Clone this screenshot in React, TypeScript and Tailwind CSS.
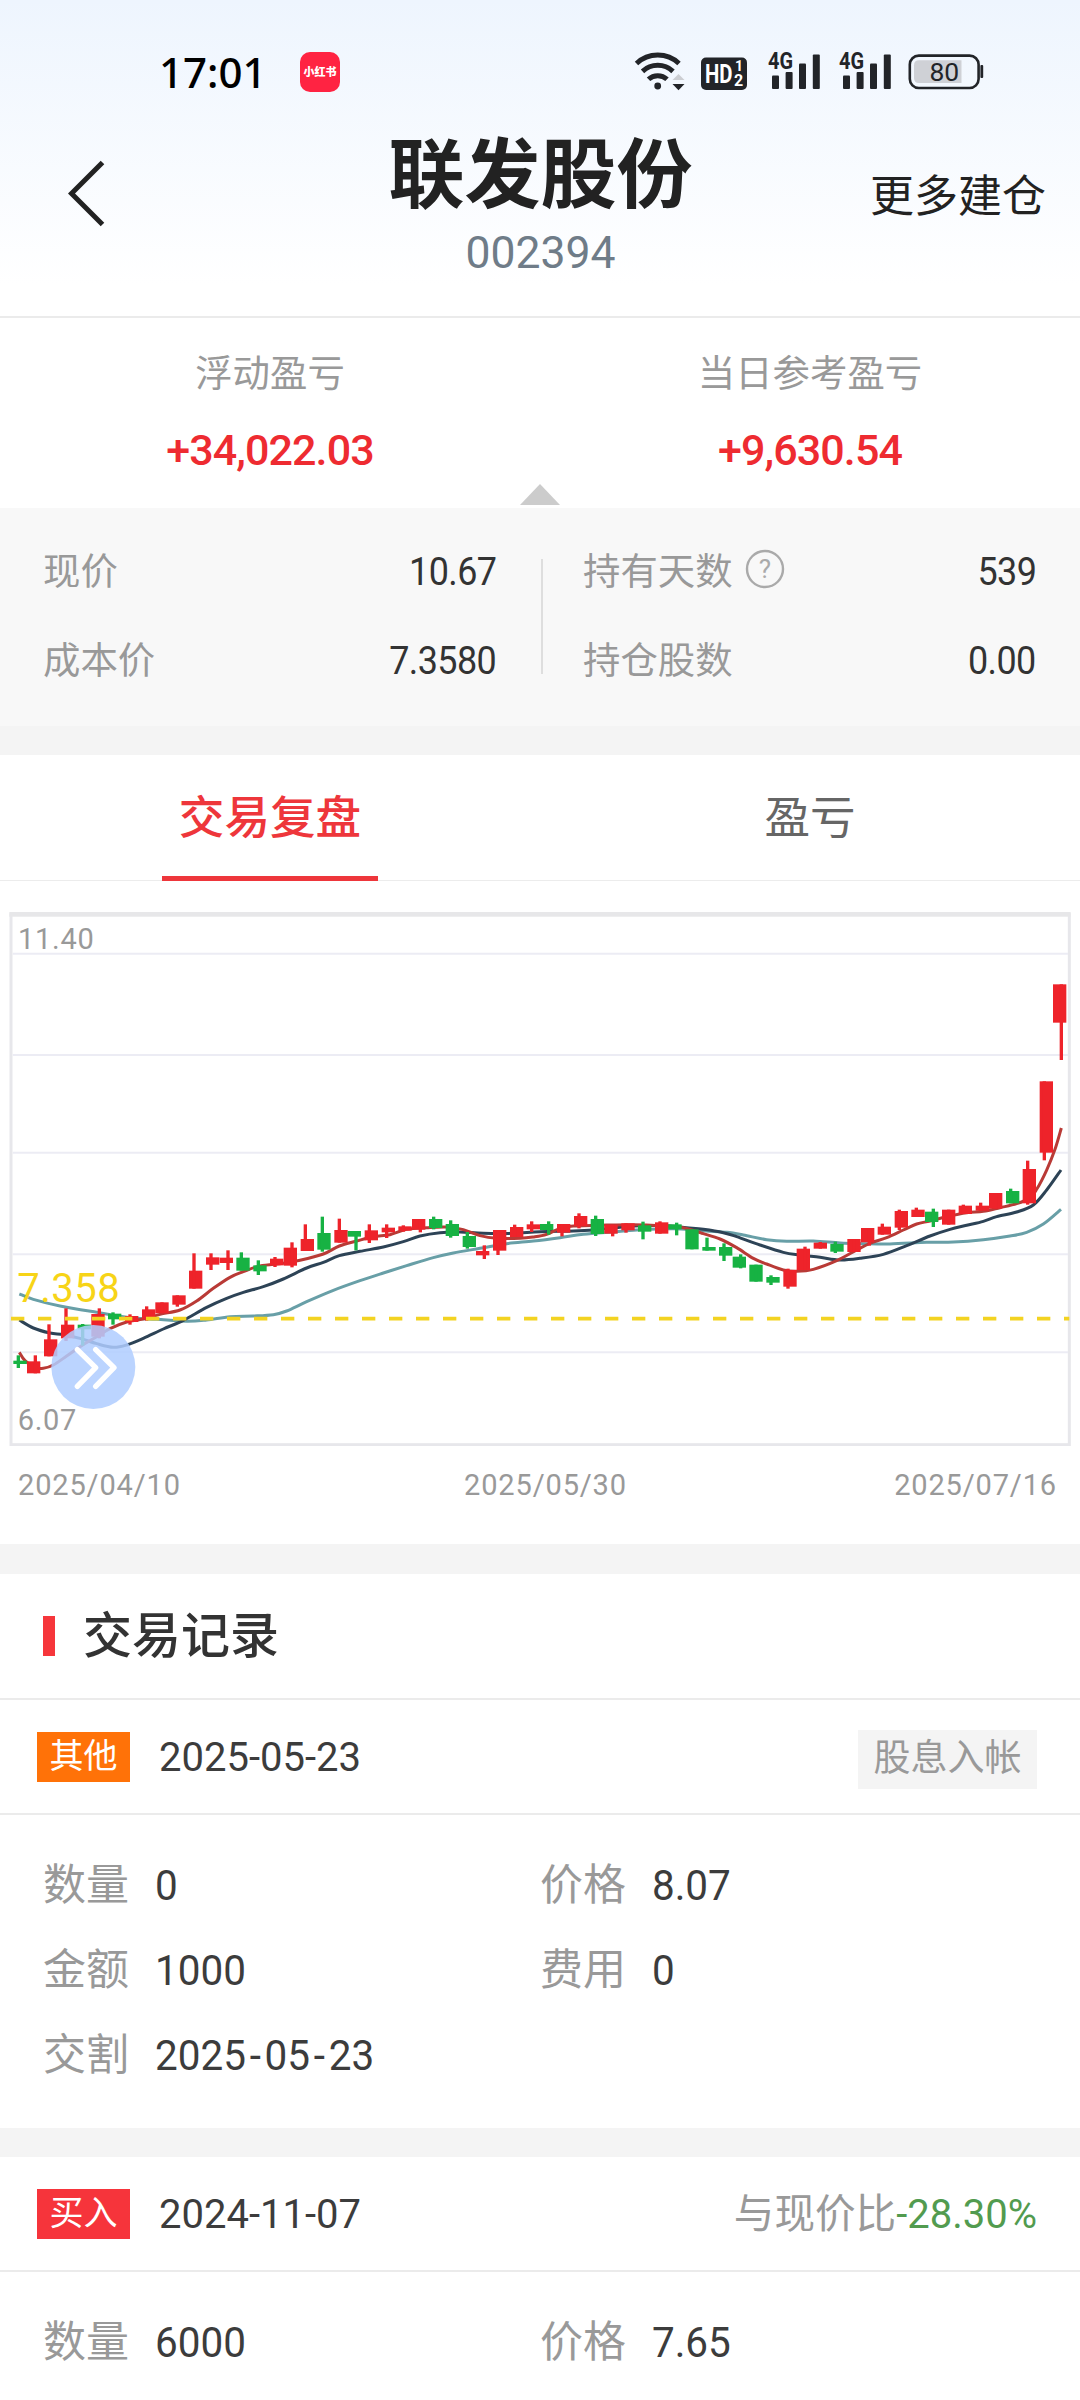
import React, { useState } from 'react';

type Point = [number, number];
// [direction, body left, body top, body bottom, wick x, wick top, wick bottom]
type Candle = ['r' | 'g', number, number, number, number, number, number];

interface Segment<T> {
  dx: number;
  dy: number;
  items: T[];
}

interface TradeRecord {
  id: number;
  kind: string;
  kindClass: string;
  date: string;
  note?: string;
  compare?: string;
  fields: { label: string; value: string }[];
}

const RED = '#ee232a';
const GREEN = '#17b243';

const candleSegments: Segment<Candle>[] = [
  {
    dx: 0,
    dy: 624,
    items: [
      ['g', 40, 722, 732, 55, 706, 744],
      ['r', 81, 724, 760, 106, 706, 760],
      ['r', 132, 658, 709, 147, 613, 709],
      ['r', 183, 614, 655, 198, 565, 663],
      ['g', 233, 614, 628, 248, 612, 677],
      ['r', 274, 582, 650, 298, 565, 655],
      ['g', 324, 581, 598, 339, 577, 614],
      ['r', 375, 588, 606, 390, 583, 614],
      ['r', 426, 568, 598, 440, 559, 602],
      ['r', 466, 547, 580, 486, 547, 580],
      ['r', 517, 526, 554, 532, 526, 560],
      ['r', 567, 452, 506, 582, 400, 506],
      ['r', 618, 412, 434, 633, 400, 450],
      ['r', 659, 413, 429, 684, 391, 450],
      ['g', 709, 413, 452, 724, 397, 452],
      ['g', 760, 436, 454, 775, 421, 465],
      ['r', 810, 416, 436, 825, 411, 441],
      ['r', 851, 383, 437, 876, 367, 442],
      ['r', 902, 357, 393, 916, 313, 393],
      ['g', 952, 339, 389, 967, 290, 395],
      ['r', 1003, 330, 368, 1018, 296, 368],
      ['g', 1043, 333, 350, 1068, 333, 391],
      ['r', 1094, 331, 361, 1108, 313, 369],
      ['r', 1145, 323, 337, 1160, 313, 354],
    ],
  },
  {
    dx: 1020,
    dy: 684,
    items: [
      ['r', 175, 259, 272, 190, 256, 275],
      ['r', 216, 237, 269, 241, 237, 277],
      ['g', 267, 237, 264, 281, 230, 268],
      ['g', 317, 252, 288, 332, 241, 293],
      ['g', 368, 288, 321, 382, 276, 326],
      ['r', 408, 333, 346, 433, 316, 357],
      ['r', 459, 270, 332, 474, 270, 345],
      ['r', 510, 261, 291, 524, 254, 291],
      ['r', 560, 253, 268, 575, 244, 276],
      ['g', 600, 252, 270, 626, 244, 284],
      ['r', 651, 252, 278, 666, 252, 289],
      ['r', 702, 228, 258, 717, 220, 265],
      ['g', 752, 237, 282, 767, 227, 288],
      ['r', 793, 254, 281, 818, 254, 289],
      ['r', 844, 250, 271, 858, 250, 278],
      ['g', 894, 256, 275, 909, 245, 298],
      ['r', 945, 247, 281, 960, 244, 281],
      ['g', 985, 253, 268, 1010, 248, 286],
      ['g', 1036, 268, 328, 1056, 268, 328],
      ['g', 1087, 321, 332, 1101, 293, 332],
      ['g', 1137, 321, 347, 1152, 310, 363],
    ],
  },
  {
    dx: 2100,
    dy: 84,
    items: [
      ['g', 98, 950, 983, 122, 943, 985],
      ['g', 148, 974, 1025, 168, 974, 1025],
      ['g', 199, 1011, 1028, 213, 1006, 1035],
      ['r', 250, 990, 1040, 264, 986, 1046],
      ['r', 290, 926, 990, 315, 920, 990],
      ['r', 341, 908, 926, 361, 906, 926],
      ['g', 391, 912, 935, 406, 905, 939],
      ['r', 442, 897, 936, 462, 897, 936],
      ['r', 483, 864, 907, 508, 864, 917],
      ['r', 533, 860, 884, 547, 851, 884],
      ['r', 584, 813, 863, 598, 809, 870],
      ['r', 634, 809, 831, 649, 803, 831],
      ['g', 675, 815, 846, 700, 806, 861],
      ['r', 726, 809, 854, 746, 809, 854],
      ['r', 776, 797, 822, 790, 794, 822],
      ['r', 827, 797, 812, 842, 788, 812],
      ['r', 867, 759, 806, 887, 759, 806],
      ['g', 918, 753, 790, 932, 746, 790],
      ['r', 968, 687, 790, 983, 662, 794],
      ['r', 1019, 424, 638, 1033, 424, 661],
      ['r', 1059, 133, 248, 1084, 133, 360],
    ],
  },
];

const shortAverage: Segment<Point>[] = [
  {
    dx: 0,
    dy: 624,
    items: [[58, 697], [75, 722], [105, 743], [130, 745], [160, 735], [200, 708], [240, 680], [290, 650], [330, 626], [380, 606], [430, 597], [480, 583], [540, 570], [590, 543], [640, 505], [690, 472], [730, 455], [780, 438], [850, 430], [900, 421], [970, 402], [1018, 378]],
  },
  {
    dx: 1020,
    dy: 684,
    items: [[50, 303], [100, 290], [150, 284], [200, 268], [260, 263], [320, 261], [370, 269], [420, 287], [470, 295], [540, 295], [580, 291], [620, 283], [660, 265], [700, 258], [800, 255], [880, 254], [960, 257], [1030, 263], [1075, 276]],
  },
  {
    dx: 2100,
    dy: 84,
    items: [[10, 881], [60, 897], [110, 923], [160, 955], [200, 972], [250, 990], [290, 994], [340, 988], [410, 962], [470, 930], [510, 910], [560, 893], [610, 870], [650, 852], [690, 843], [740, 830], [800, 818], [850, 814], [900, 803], [950, 791], [990, 773], [1010, 748], [1040, 690], [1065, 628], [1084, 564]],
  },
];

const midAverage: Segment<Point>[] = [
  {
    dx: 0,
    dy: 624,
    items: [[58, 600], [100, 624], [150, 639], [190, 644], [240, 655], [290, 671], [340, 682], [380, 675], [430, 655], [490, 627], [550, 601], [620, 562], [680, 535], [730, 517], [790, 500], [850, 477], [920, 444], [970, 427], [1018, 407]],
  },
  {
    dx: 1020,
    dy: 684,
    items: [[60, 334], [130, 321], [190, 305], [240, 288], [300, 278], [360, 276], [430, 280], [520, 280], [600, 275], [700, 273], [760, 270], [840, 262], [900, 257], [980, 257], [1040, 263]],
  },
  {
    dx: 2100,
    dy: 84,
    items: [[10, 868], [70, 878], [110, 890], [180, 915], [250, 937], [300, 945], [360, 952], [420, 960], [480, 955], [550, 943], [620, 917], [690, 888], [750, 868], [800, 856], [850, 844], [890, 830], [950, 816], [1000, 795], [1040, 750], [1083, 690]],
  },
];

const longAverage: Segment<Point>[] = [
  {
    dx: 0,
    dy: 624,
    items: [[58, 522], [100, 538], [180, 558], [290, 577], [400, 594], [470, 598], [560, 604], [620, 600], [690, 590], [760, 588], [820, 584], [860, 573], [920, 545], [1000, 511]],
  },
  {
    dx: 1020,
    dy: 684,
    items: [[60, 422], [130, 399], [200, 377], [280, 353], [340, 339], [420, 325], [500, 311], [580, 303], [660, 293], [730, 283], [830, 275], [900, 269], [1000, 266], [1060, 269]],
  },
  {
    dx: 2100,
    dy: 84,
    items: [[20, 873], [80, 877], [130, 885], [200, 899], [260, 904], [340, 903], [420, 909], [490, 911], [570, 912], [680, 907], [760, 906], [850, 899], [930, 888], [980, 877], [1030, 852], [1083, 808]],
  },
];

const gridLines = [125, 429, 722, 1027, 1321];

const records: TradeRecord[] = [
  {
    id: 1,
    kind: '其他',
    kindClass: 'bg-[#ff7208]',
    date: '2025-05-23',
    note: '股息入帐',
    fields: [
      { label: '数量', value: '0' },
      { label: '价格', value: '8.07' },
      { label: '金额', value: '1000' },
      { label: '费用', value: '0' },
      { label: '交割', value: '2025-05-23' },
    ],
  },
  {
    id: 2,
    kind: '买入',
    kindClass: 'bg-[#f6343b]',
    date: '2024-11-07',
    compare: '-28.30%',
    fields: [
      { label: '数量', value: '6000' },
      { label: '价格', value: '7.65' },
    ],
  },
];

// Catmull-Rom spline through the joined segments
const smoothPath = (segments: Segment<Point>[]) => {
  const p = segments.flatMap((s) => s.items.map(([x, y]): Point => [x + s.dx, y + s.dy]));
  let d = `M${p[0][0]} ${p[0][1]}`;
  for (let i = 0; i < p.length - 1; i++) {
    const a = p[i - 1] || p[i];
    const b = p[i];
    const c = p[i + 1];
    const e = p[i + 2] || c;
    d += ` C${b[0] + (c[0] - a[0]) / 6} ${b[1] + (c[1] - a[1]) / 6} ${c[0] - (e[0] - b[0]) / 6} ${c[1] - (e[1] - b[1]) / 6} ${c[0]} ${c[1]}`;
  }
  return d;
};

function SignalIcon() {
  return (
    <svg className="overflow-visible" width="53" height="38" viewBox="0 0 53 38" fill="#222428">
      <text x="0" y="17.3" fontFamily="Roboto" fontWeight="700" fontSize="23" textLength="25" lengthAdjust="spacingAndGlyphs">
        4G
      </text>
      <rect x="4" y="23.5" width="7" height="13.5" rx="1" />
      <rect x="17.6" y="20" width="7" height="17" rx="1" />
      <rect x="31" y="11.5" width="7" height="25.5" rx="1" />
      <rect x="44.8" y="2.5" width="7" height="34.5" rx="1" />
    </svg>
  );
}

function StatusBar() {
  return (
    <div className="h-[124px] pt-[52px] flex items-start">
      <span className="w-[141px] ml-[159px] font-['Noto_Sans'] font-medium text-[42px] leading-[40px] text-black">
        17:01
      </span>
      <span className="w-10 h-10 rounded-[10px] bg-[#ff2342] text-white font-black text-[11px] leading-[41px] text-center whitespace-nowrap">
        小红书
      </span>
      <div className="ml-[294px] flex items-start">
        <svg width="52" height="40" viewBox="0 0 52 40" fill="none" stroke="#222428" strokeWidth="5">
          <path d="M2.5 11.5 A31 31 0 0 1 45 11.5" />
          <path d="M8.5 19.3 A22.5 22.5 0 0 1 39 19.3" />
          <path d="M14.5 27.3 A13.5 13.5 0 0 1 33 27.3" />
          <circle cx="23.7" cy="34" r="3.4" fill="#222428" stroke="none" />
          <path d="M38.5 28 L44.5 22 L50.5 28 Z" fill="#ccced2" stroke="none" />
          <path d="M38.5 32 L50.5 32 L44.5 38.2 Z" fill="#222428" stroke="none" />
        </svg>
        <svg className="ml-[15px]" width="46" height="40" viewBox="0 0 46 40">
          <rect x="0" y="5.5" width="46" height="32.5" rx="5" fill="#222428" />
          <g fill="#fff" fontFamily="Roboto" fontWeight="700">
            <text x="4" y="31" fontSize="25" textLength="27.5" lengthAdjust="spacingAndGlyphs">HD</text>
            <text x="34" y="18.8" fontSize="14">1</text>
            <text x="33" y="34" fontSize="16">2</text>
          </g>
        </svg>
        <div className="ml-[21px] flex gap-[18px]">
          <SignalIcon />
          <SignalIcon />
        </div>
        <svg className="ml-[16px]" width="76" height="40" viewBox="0 0 76 40">
          <rect x="1.8" y="3.6" width="68.8" height="32.4" rx="9" fill="none" stroke="#222428" strokeWidth="2.6" />
          <path d="M11 8.3 H53.5 V31 H11 Q6 31 6 26 V13.3 Q6 8.3 11 8.3 Z" fill="#cfd1d6" />
          <rect x="72.4" y="13" width="2.8" height="13" rx="1" fill="#222428" />
          <text x="36.3" y="29" fontFamily="Roboto" fontSize="26.5" textAnchor="middle" fill="#222428">80</text>
        </svg>
      </div>
    </div>
  );
}

function Header() {
  return (
    <header className="h-[318px] border-b-2 border-[#ebebeb] bg-gradient-to-b from-[#eef5fe] to-white to-90%">
      <StatusBar />
      <div className="grid grid-cols-3 h-[160px] pl-[68px] pr-[34px]">
        <svg className="mt-[35px]" width="38" height="68" viewBox="0 0 38 68" fill="none" stroke="#222" strokeWidth="5">
          <path d="M34.5 3.5 L3.5 34.5 L34.5 65.5" />
        </svg>
        <div className="flex flex-col items-center justify-self-center mr-[33px] pt-[3px] whitespace-nowrap">
          <h1 className="text-[76px] leading-[98px] font-bold text-[#222]">联发股份</h1>
          <span className="text-[44.5px] leading-[56px] text-[#6f7c88]">002394</span>
        </div>
        <button className="mt-[43px] h-[60px] leading-[60px] text-[44px] text-[#222] text-right">更多建仓</button>
      </div>
    </header>
  );
}

function Summary() {
  const items = [
    { label: '浮动盈亏', value: '+34,022.03' },
    { label: '当日参考盈亏', value: '+9,630.54' },
  ];
  return (
    <section className="relative h-[190px] bg-white grid grid-cols-2">
      {items.map((item) => (
        <div key={item.label} className="flex flex-col items-center pt-[31px]">
          <span className="text-[37.4px] leading-[50px] text-[#999]">{item.label}</span>
          <span className="mt-[26px] text-[43px] leading-[50px] font-medium tracking-[-0.9px] text-[#ee2b31]">{item.value}</span>
        </div>
      ))}
      <svg className="absolute left-[520px] top-[166px]" width="40" height="21" viewBox="0 0 40 21">
        <path d="M20 0 L40 21 H0 Z" fill="#ccc" />
      </svg>
    </section>
  );
}

function Stat({ label, value, help }: { label: string; value: string; help?: boolean }) {
  return (
    <div className="h-[89px] flex items-center">
      <span className="text-[37.4px] text-[#999]">{label}</span>
      {help && (
        <svg className="ml-[12px] mb-[7px]" width="40" height="40" viewBox="0 0 40 40">
          <circle cx="20" cy="20" r="18" fill="none" stroke="#aaa" strokeWidth="2.4" />
          <text x="20" y="29" fontFamily="Roboto" fontSize="26" textAnchor="middle" fill="#aaa">?</text>
        </svg>
      )}
      <span className="ml-auto inline-block origin-right scale-x-[0.945] text-[38px] tracking-[-0.6px] text-[#333]">{value}</span>
    </div>
  );
}

function Stats() {
  return (
    <section className="h-[218px] pt-[6px] bg-[#f8f8f8] flex pl-[43px] pr-[44px]">
      <div className="w-[453px] pt-[14px]">
        <Stat label="现价" value="10.67" />
        <Stat label="成本价" value="7.3580" />
      </div>
      <div className="w-[2px] h-[115px] mt-[45px] ml-[45px] bg-[#dedede]" />
      <div className="flex-1 pt-[14px] ml-[40px]">
        <Stat label="持有天数" value="539" help />
        <Stat label="持仓股数" value="0.00" />
      </div>
    </section>
  );
}

function Tabs() {
  const [active, setActive] = useState('review');
  const tabs = [
    { id: 'review', label: '交易复盘' },
    { id: 'profit', label: '盈亏' },
  ];
  return (
    <nav className="h-[126px] grid grid-cols-2 bg-white border-b border-[#ececec]">
      {tabs.map((tab) => (
        <button key={tab.id} onClick={() => setActive(tab.id)} className="flex flex-col items-center">
          <span
            className={`h-[121px] leading-[128px] text-[45.6px] ${
              active === tab.id ? 'font-medium text-[#ee363b]' : 'text-[#666]'
            }`}
          >
            {tab.label}
          </span>
          {active === tab.id && <span className="w-[216px] h-[5px] bg-[#ee363b]" />}
        </button>
      ))}
    </nav>
  );
}

function Chart() {
  return (
    <section className="bg-white h-[663px] pt-[31px]">
      <svg width="1080" height="534" viewBox="0 0 3240 1602">
        <rect x="33" y="8" width="3175" height="1590" fill="none" stroke="#e7e7eb" strokeWidth="9" />
        <rect x="28" y="0" width="3184" height="14" fill="#e7e7e9" />
        {gridLines.map((y) => (
          <line key={y} x1="38" x2="3204" y1={y} y2={y} stroke="#ececf4" strokeWidth="6" />
        ))}
        <g fill="none" strokeWidth="9">
          <path d={smoothPath(longAverage)} stroke="#689fa7" />
          <path d={smoothPath(midAverage)} stroke="#2d4356" />
          <path d={smoothPath(shortAverage)} stroke="#b93a36" />
        </g>
        {candleSegments.map((segment) => (
          <g key={segment.dx} transform={`translate(${segment.dx} ${segment.dy})`}>
            {segment.items.map(([dir, x, top, bottom, wick, high, low]) => (
              <g key={x} fill={dir === 'r' ? RED : GREEN}>
                <rect x={x} y={top} width="40" height={bottom - top} />
                <rect x={wick - 5} y={high} width="10" height={low - high} />
              </g>
            ))}
          </g>
        ))}
        <line x1="33" x2="3208" y1="1220" y2="1220" stroke="#f3d321" strokeWidth="11" strokeDasharray="40 41" />
        <g fontFamily="Roboto" fill="#999" fontSize="87" letterSpacing="2.2">
          <text x="54" y="110">11.40</text>
          <text x="53" y="1553">6.07</text>
        </g>
        <text x="52" y="1169" fontFamily="Roboto" fill="#f7d417" fontSize="120" letterSpacing="1.5">7.358</text>
        <circle cx="280" cy="1365" r="126" fill="#b0cdff" fillOpacity="0.86" />
        <g fill="none" stroke="#fff" strokeWidth="16" strokeLinecap="round" strokeLinejoin="round">
          <path d="M232 1313 L287 1367 L232 1423" />
          <path d="M287 1313 L342 1367 L287 1423" />
        </g>
      </svg>
      <div className="mt-[19px] flex justify-between pl-[18px] pr-[23px] text-[29px] leading-[40px] tracking-[0.85px] text-[#999]">
        <span>2025/04/10</span>
        <span className="pl-4">2025/05/30</span>
        <span>2025/07/16</span>
      </div>
    </section>
  );
}

function FieldValue({ value }: { value: string }) {
  return (
    <span className="inline-block origin-left scale-x-[0.94] text-[#3c3c3c]">
      {value.split('-').map((part, i) => (
        <React.Fragment key={i}>
          {i > 0 && <span className="mx-1">-</span>}
          {part}
        </React.Fragment>
      ))}
    </span>
  );
}

function RecordCard({ record }: { record: TradeRecord }) {
  return (
    <article className="bg-white">
      <div className="h-[115px] border-b-2 border-[#ebebeb] flex items-center pl-[37px] pr-[43px]">
        <span className={`w-[93px] h-[50px] leading-[49px] text-center text-[34px] text-white ${record.kindClass}`}>
          {record.kind}
        </span>
        <span className="ml-[29px] pt-[2px] text-[40px] text-[#3c3c3c]">{record.date}</span>
        {record.note && (
          <span className="ml-auto mt-[5px] h-[59px] w-[179px] text-center leading-[57px] text-[37px] bg-[#f4f4f4] text-[#999]">
            {record.note}
          </span>
        )}
        {record.compare && (
          <span className="ml-auto pt-[2px] text-[40.6px] text-[#999]">
            与现价比<span className="text-[40px] text-[#529b4f]">{record.compare}</span>
          </span>
        )}
      </div>
      <div className="grid grid-cols-[497px_1fr] pt-[28px] pb-[30px] pl-[43px]">
        {record.fields.map((field) => (
          <div key={field.label} className="h-[85px] flex items-center text-[43px]">
            <span className="w-[112px] text-[#999]">{field.label}</span>
            <FieldValue value={field.value} />
          </div>
        ))}
      </div>
    </article>
  );
}

export default function App() {
  return (
    <div className="w-[1080px] h-[2400px] overflow-hidden bg-[#f4f4f4] font-[Roboto,'Noto_Sans_CJK_SC',sans-serif]">
      <Header />
      <Summary />
      <Stats />
      <div className="h-[29px]" />
      <Tabs />
      <Chart />
      <div className="h-[30px]" />
      <div className="h-[126px] bg-white border-b-2 border-[#ebebeb] flex items-center pl-[43px]">
        <span className="w-3 h-10 bg-[#f6363b]" />
        <h2 className="ml-[28px] pt-[2px] text-[49px] font-medium text-[#333]">交易记录</h2>
      </div>
      <div className="flex flex-col gap-[29px]">
        {records.map((record) => (
          <RecordCard key={record.id} record={record} />
        ))}
      </div>
    </div>
  );
}
